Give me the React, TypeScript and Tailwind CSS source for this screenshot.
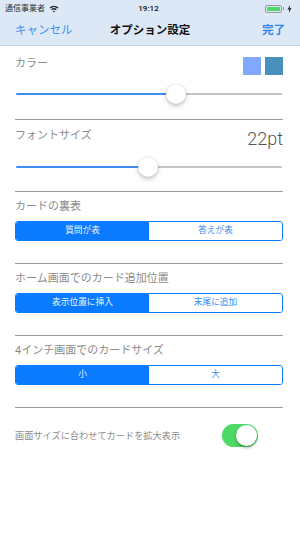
import React from "react";

const font = { fontFamily: "'Roboto', 'Noto Sans CJK JP', sans-serif" };

const Slider = ({ value }: { value: number }) => {
  return (
    <div className="relative h-[20px] mx-[1px]">
      <div className="absolute left-0 right-0 top-[9px] flex h-[2px]">
        <div className="h-full bg-[#3f8cf2] rounded-l-full" style={{ width: `${value}%` }} />
        <div className="h-full flex-1 bg-[#c4c4c4] rounded-r-full" />
      </div>
      <div
        className="absolute top-0 h-[20px] w-[20px] -ml-[10px] rounded-full bg-white shadow-[0_2px_4px_rgba(0,0,0,0.25),0_0_1px_rgba(0,0,0,0.2)]"
        style={{ left: `${value}%` }}
      />
    </div>
  );
};

const Segment = ({ left, right }: { left: string; right: string }) => {
  return (
    <div className="flex h-[20px] rounded-[3px] border border-[#0a7bff] overflow-hidden text-[8.7px]">
      <div className="flex-1 flex items-center justify-center bg-[#0a7bff] text-[#e6f0ff]">{left}</div>
      <div className="flex-1 flex items-center justify-center bg-white text-[#3a8cf5]">{right}</div>
    </div>
  );
};

const Line = () => <div className="h-px bg-[#9a9a9a]" />;

const SegmentSection = ({ label, left, right }: { label: string; left: string; right: string }) => {
  return (
    <div className="pt-[8px] pb-[22px]">
      <div className="text-[11px] leading-[14px] text-[#8c8c8c]">{label}</div>
      <div className="mt-[7px]">
        <Segment left={left} right={right} />
      </div>
    </div>
  );
};

const App = () => {
  return (
    <div className="w-[300px] h-[533px] bg-white overflow-hidden" style={font}>
      <div className="bg-[#dde8f7] border-b border-[#cbd4df]">
        <div className="h-[17px] flex items-center px-[5px] text-[8px] text-[#333]">
          <div className="flex-1 flex items-center gap-[4px]">
            <span>通信事業者</span>
            <svg width="10" height="8" viewBox="0 0 10 8">
              <path d="M1 3 A6 6 0 0 1 9 3" fill="none" stroke="#222" strokeWidth="1.3" />
              <path d="M2.6 4.7 A3.8 3.8 0 0 1 7.4 4.7" fill="none" stroke="#222" strokeWidth="1.3" />
              <path d="M5 7.6 L3.9 6.2 A1.6 1.6 0 0 1 6.1 6.2 Z" fill="#222" />
            </svg>
          </div>
          <span className="font-semibold text-[#222]">19:12</span>
          <div className="flex-1 flex items-center justify-end gap-[1px] pr-[3px]">
            <div className="w-[17px] h-[8px] rounded-[2px] border border-[#999] p-[1px]">
              <div className="h-full w-full rounded-[1px] bg-[#4cd964]" />
            </div>
            <div className="w-[1px] h-[3px] bg-[#999]" />
            <svg width="5" height="8" viewBox="0 0 5 8" className="ml-[2px]">
              <path d="M3 0 L0.5 4.5 L2.3 4.5 L1.8 8 L4.5 3.3 L2.7 3.3 Z" fill="#222" />
            </svg>
          </div>
        </div>
        <div className="h-[28px] flex items-center justify-between px-[15px] text-[11.5px]">
          <span className="text-[#3d8ff0] w-[60px]">キャンセル</span>
          <span className="font-bold text-[#111]">オプション設定</span>
          <span className="font-bold text-[#2f86f0] w-[60px] text-right">完了</span>
        </div>
      </div>

      <div className="pl-[15px] pr-[17px]">
        <div className="pt-[11px] pb-[15px]">
          <div className="flex justify-between items-start h-[18px]">
            <span className="text-[11px] leading-[14px] text-[#8c8c8c]">カラー</span>
            <div className="flex gap-[4px]">
              <div className="w-[18px] h-[18px] bg-[#82a8ff]" />
              <div className="w-[18px] h-[18px] bg-[#4a90bc]" />
            </div>
          </div>
          <div className="mt-[9px]">
            <Slider value={60.2} />
          </div>
        </div>
        <Line />

        <div className="pt-[9px] pb-[14px]">
          <div className="flex justify-between items-start">
            <span className="text-[11px] leading-[14px] text-[#8c8c8c]">フォントサイズ</span>
            <span className="text-[18px] leading-[20px] font-light text-[#555]">22pt</span>
          </div>
          <div className="mt-[8px]">
            <Slider value={49.6} />
          </div>
        </div>
        <Line />

        <SegmentSection label="カードの裏表" left="質問が表" right="答えが表" />
        <Line />
        <SegmentSection label="ホーム画面でのカード追加位置" left="表示位置に挿入" right="末尾に追加" />
        <Line />
        <SegmentSection label="4インチ画面でのカードサイズ" left="小" right="大" />
        <Line />

        <div className="pt-[16px] flex items-center">
          <span className="w-[207px] text-[9.2px] text-[#8c8c8c]">画面サイズに合わせてカードを拡大表示</span>
          <div className="w-[36px] h-[23px] rounded-full bg-[#4cd964] flex items-center justify-end p-[1px]">
            <div className="w-[21px] h-[21px] rounded-full bg-white shadow-[0_2px_3px_rgba(0,0,0,0.3)]" />
          </div>
        </div>
      </div>
    </div>
  );
};

export default App;
